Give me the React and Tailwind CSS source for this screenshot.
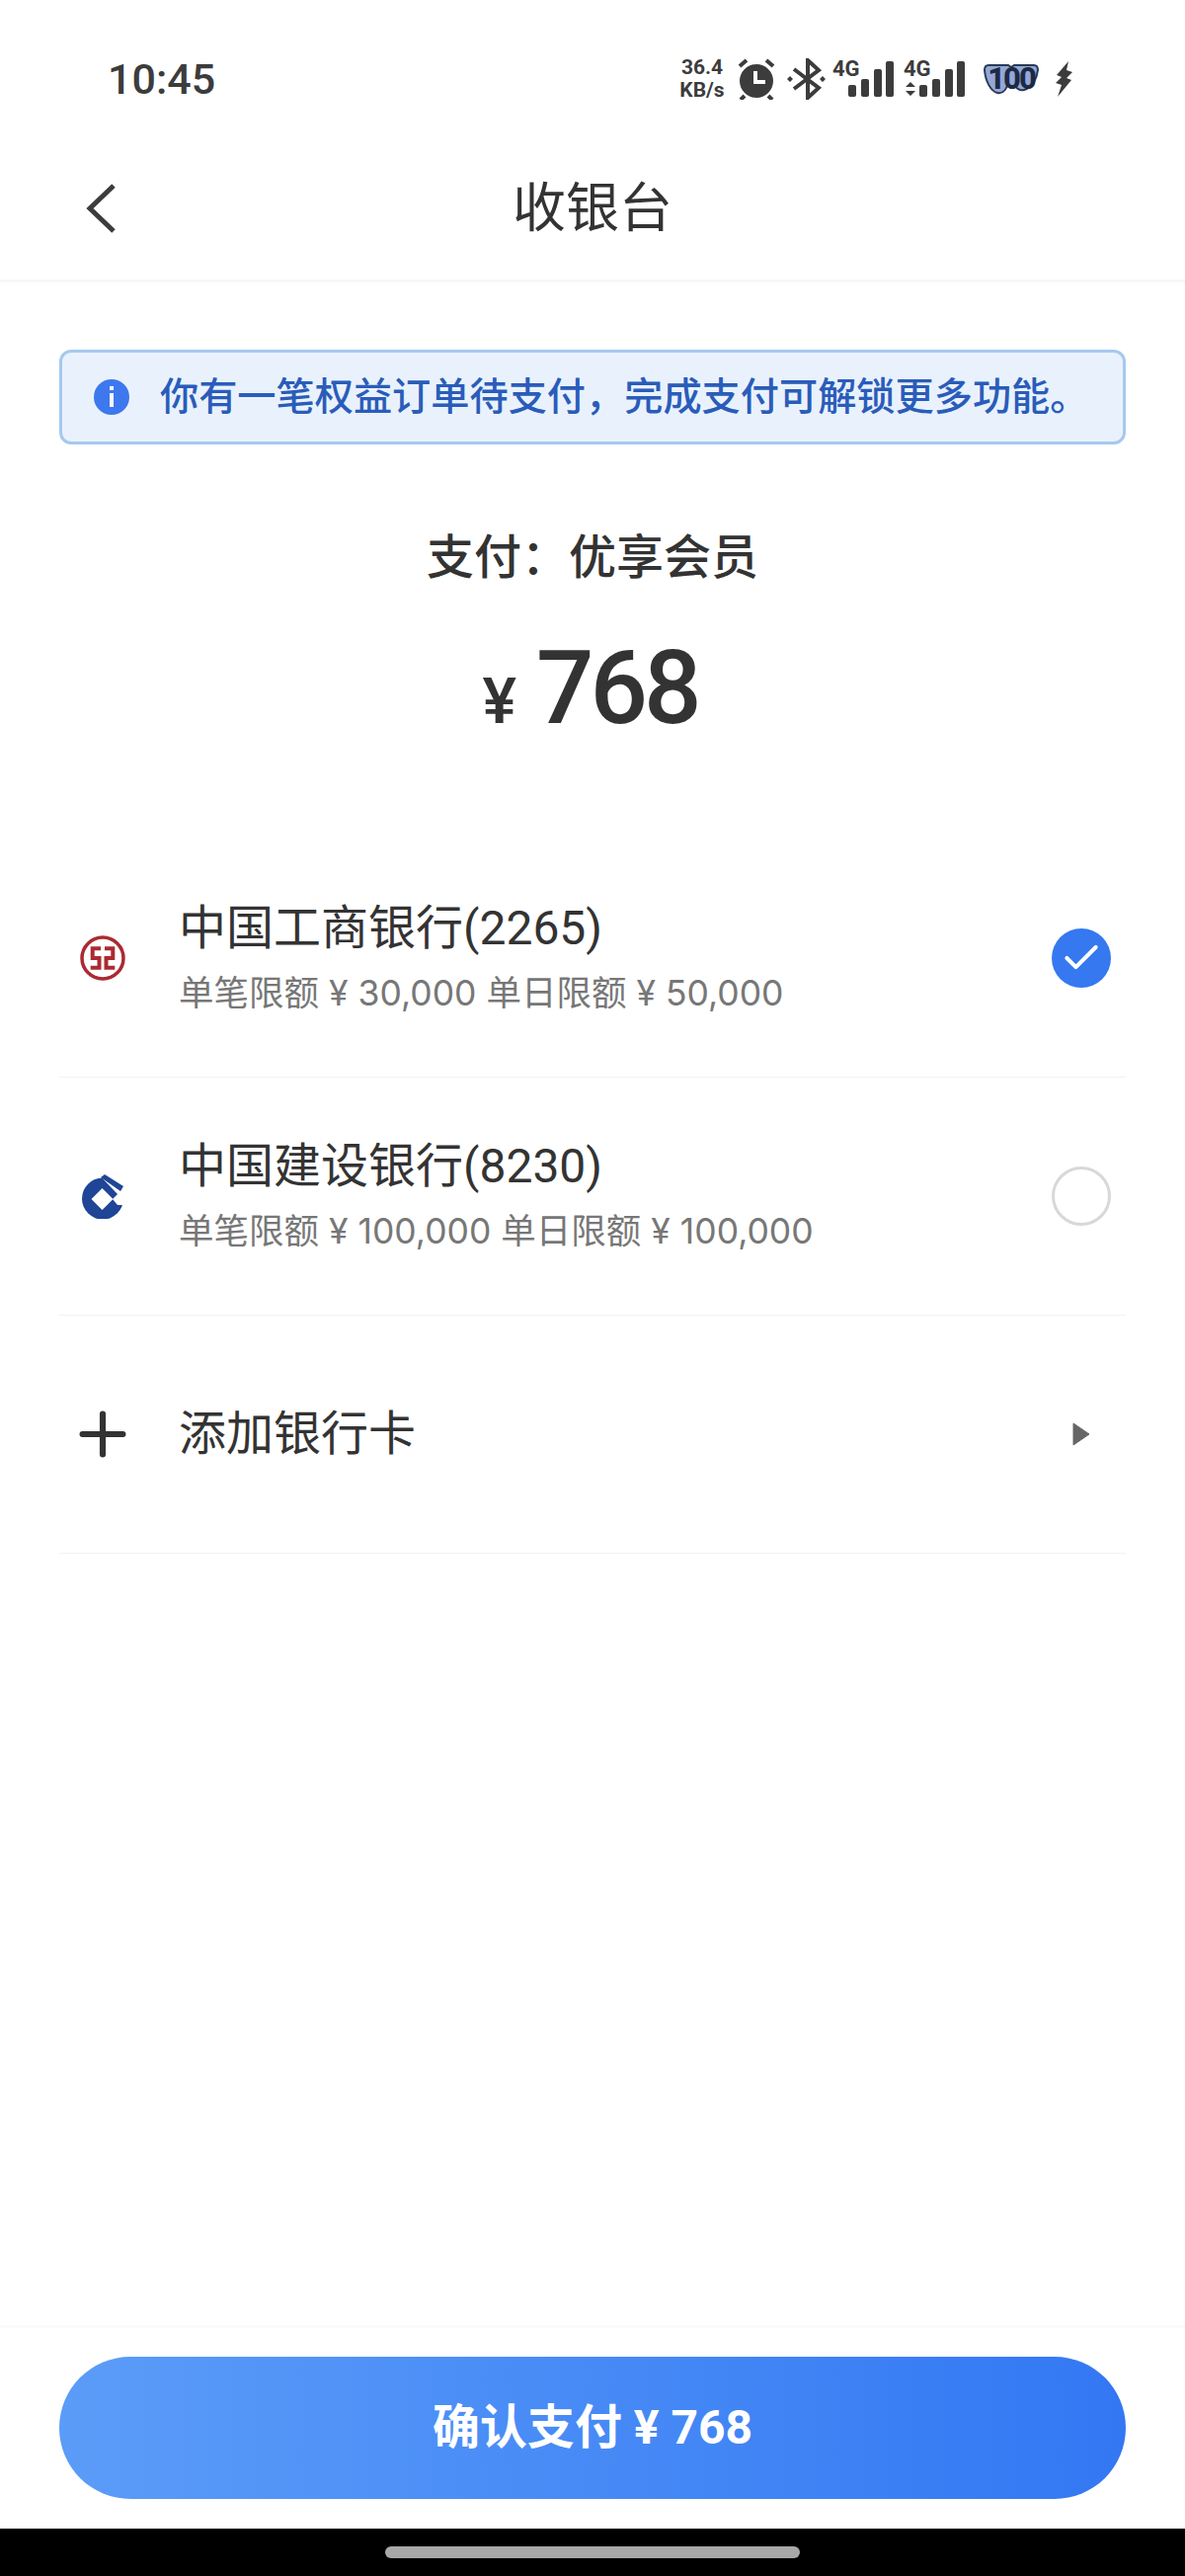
import React from 'react';
import { Check, Plus } from 'lucide-react';

const font = "font-['Roboto','Noto_Sans_CJK_SC',sans-serif]";

const Signal = ({ arrows }) => (
  <svg width="62" height="44" viewBox="0 0 62 44" className="-mt-[4px] text-[#3c3c3c]">
    <text x="0" y="21" fontSize="22" fontWeight="700" fontFamily="Roboto" fill="currentColor">4G</text>
    {arrows && <path d="M2 32l5-5 5 5zM2 36l5 5 5-5z" fill="currentColor" />}
    <rect x="16" y="30" width="8" height="12" rx="2" fill="currentColor" />
    <rect x="29" y="24" width="8" height="18" rx="2" fill="currentColor" />
    <rect x="42" y="14" width="8" height="28" rx="2" fill="currentColor" />
    <rect x="54" y="6" width="8" height="36" rx="2" fill="currentColor" />
  </svg>
);

const StatusBar = () => (
  <div className="h-[120px] pt-[40px] flex items-center justify-between pl-[109px] pr-[114px]">
    <span className="text-[43px] leading-[52px] font-medium text-[#3c3c3c]">10:45</span>
    <div className="flex items-center">
      <div className="w-[50px] text-[21px] leading-[23px] font-bold text-[#3c3c3c] text-center">
        <div>36.4</div>
        <div>KB/s</div>
      </div>
      <svg width="38" height="42" viewBox="0 0 38 42" className="ml-[11px]">
        <circle cx="19" cy="23" r="17" fill="#3c3c3c" />
        <path d="M18 13v11h10" fill="none" stroke="#fff" strokeWidth="4" />
        <path d="M2 8l7-6M36 8l-7-6M7 38l-4 4M31 38l4 4" stroke="#3c3c3c" strokeWidth="4" fill="none" />
      </svg>
      <svg width="40" height="42" viewBox="0 0 40 42" className="ml-[12px]">
        <path d="M7 11l25 19-11 10V2l11 10L7 31" fill="none" stroke="#3c3c3c" strokeWidth="4" />
        <path d="M3 18l3 3-3 3-3-3zM36 18l3 3-3 3-3-3z" fill="#3c3c3c" />
      </svg>
      <div className="ml-[6px]"><Signal /></div>
      <div className="ml-[10px]"><Signal arrows /></div>
      <div className="ml-[18px] relative w-[58px] h-[34px]">
        <svg width="58" height="34" viewBox="0 0 58 34" className="absolute inset-0">
          <path d="M6 3h20l3 2 3-2h20c3 0 4 2 4 5-1 9-6 18-14 20-4 1-7-1-9-4h-8c-2 5-5 8-10 7C9 30 3 20 2 8c0-3 1-5 4-5z" fill="#93a8d8" stroke="#2c3a55" strokeWidth="2" />
        </svg>
        <span className="absolute inset-0 text-center text-[31px] leading-[33px] font-extrabold tracking-[-2px] text-[#1d2a44]">100</span>
      </div>
      <svg width="18" height="36" viewBox="0 0 18 36" className="ml-[15px]">
        <path d="M14 0L2 14l5 2-6 6 6 2-4 12 14-17-5-2 6-6-6-2z" fill="#3c3c3c" />
      </svg>
    </div>
  </div>
);

const Icbc = () => (
  <svg width="46" height="46" viewBox="0 0 46 46">
    <circle cx="23" cy="23" r="21" fill="none" stroke="#ab2a32" strokeWidth="3.5" />
    <path d="M21 13.3H12.7V23H19.5V32.7H10.7M25 13.3H33.3V23H26.5V32.7H35.3" fill="none" stroke="#ab2a32" strokeWidth="4" />
  </svg>
);

const Ccb = () => (
  <svg width="46" height="46" viewBox="0 0 46 46">
    <circle cx="23" cy="25.5" r="21" fill="#1e4596" />
    <path d="M22.5 15l11 11-11 11-11-11z" fill="#fff" />
    <path d="M33 26l5-5h8v11H38z" fill="#fff" />
    <path d="M18 0h28v21h-8z" fill="#fff" />
    <path d="M25 1l19 12-3 5L21 4z" fill="#1e4596" />
  </svg>
);

const BankRow = ({ logo, name, limits, selected }) => (
  <div className="h-[241px] flex items-center border-b border-[#f2f2f2]">
    <div className="w-[46px] flex justify-center ml-[21px] shrink-0">{logo}</div>
    <div className="ml-[54px] flex-1 pb-[2px]">
      <div className="text-[48px] leading-[60px] text-[#333]">{name}</div>
      <div className="mt-[14px] font-['Inter','Noto_Sans_CJK_SC',sans-serif] text-[35.5px] leading-[44px] text-[#777]">{limits}</div>
    </div>
    {selected ? (
      <div className="w-[60px] h-[60px] mr-[15px] rounded-full bg-[#3578f0] flex items-center justify-center">
        <Check size={44} strokeWidth={2.2} className="text-white" />
      </div>
    ) : (
      <div className="w-[60px] h-[60px] mr-[15px] rounded-full border-[3px] border-[#d8d8d8]" />
    )}
  </div>
);

export default function App() {
  return (
    <div className={`${font} w-[1200px] h-[2608px] bg-white flex flex-col`}>
      <StatusBar />
      <div className="h-[166px] pt-[20px] relative flex items-center justify-center border-b-[3px] border-[#f8f8f8]">
        <svg width="32" height="54" viewBox="0 0 32 54" className="absolute left-[85px] top-[64px]">
          <path d="M30 4L6 27l24 23" fill="none" stroke="#3c3c3c" strokeWidth="5" />
        </svg>
        <span className="text-[54px] text-[#333]">收银台</span>
      </div>

      <div className="flex-1 px-[60px] pt-[68px]">
        <div className="h-[96px] rounded-[12px] border-[3px] border-[#a6c9ee] bg-[#e9f2fc] flex items-center pl-[32px]">
          <span className="w-[36px] h-[36px] rounded-full bg-[#3d78ee] flex items-center justify-center">
            <svg width="8" height="22" viewBox="0 0 8 22">
              <rect x="2" y="0" width="4" height="4" fill="#fff" />
              <rect x="2" y="7" width="4" height="14" fill="#fff" />
            </svg>
          </span>
          <span className="ml-[31px] text-[39.2px] font-medium text-[#2a5cba]">你有一笔权益订单待支付，完成支付可解锁更多功能。</span>
        </div>

        <div className="mt-[85px] text-center text-[48px] leading-[60px] font-medium text-[#333]">支付：优享会员</div>
        <div className="mt-[42px] pr-[5px] flex items-baseline justify-center text-[#333]">
          <span className="text-[65px] font-medium mr-[20px]">¥</span>
          <span className="text-[103px] leading-[120px] font-medium tracking-[-4px]">768</span>
        </div>

        <div className="mt-[90px]">
          <BankRow logo={<Icbc />} name="中国工商银行(2265)" limits="单笔限额 ¥ 30,000 单日限额 ¥ 50,000" selected />
          <BankRow logo={<Ccb />} name="中国建设银行(8230)" limits="单笔限额 ¥ 100,000 单日限额 ¥ 100,000" />
          <div className="h-[241px] flex items-center border-b border-[#f2f2f2]">
            <div className="w-[46px] flex justify-center ml-[21px]">
              <Plus size={70} strokeWidth={2.1} className="text-[#333] shrink-0" />
            </div>
            <span className="ml-[54px] flex-1 text-[48px] text-[#333]">添加银行卡</span>
            <svg width="18" height="24" viewBox="0 0 18 24" className="mr-[36px]">
              <path d="M1 1l16 11L1 23z" fill="#666" stroke="#666" strokeLinejoin="round" />
            </svg>
          </div>
        </div>
      </div>

      <div className="h-[206px] pt-[29px] px-[60px] border-t-[3px] border-[#fafafa]">
        <button className="w-full h-[144px] rounded-[72px] bg-gradient-to-r from-[#5b9cf8] to-[#3377f3] text-white text-[48px] font-bold">确认支付 ¥ 768</button>
      </div>
      <div className="h-[48px] bg-black flex justify-center pt-[18px]">
        <div className="w-[420px] h-[12px] rounded-full bg-[#a8a8a8]" />
      </div>
    </div>
  );
}
